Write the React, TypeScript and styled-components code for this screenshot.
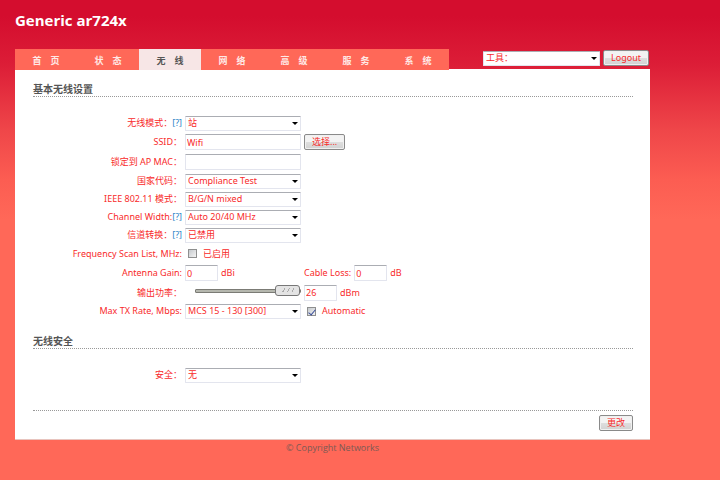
import React, { useState } from 'react'
import styled, { createGlobalStyle } from 'styled-components'

const GlobalStyle = createGlobalStyle`
  * {
    box-sizing: border-box;
  }
  body {
    margin: 0;
    min-height: 100vh;
    background: #ff6858 linear-gradient(#d40d2e 0, #d40d2e 16px, #dc1d37 64px, #ef4649 130px, #fc5d52 180px, #ff6858 220px) no-repeat;
    color: #f82a2a;
    font-family: 'Noto Sans', 'Noto Sans CJK SC', sans-serif;
    font-size: 9px;
    line-height: 12px;
  }
  input, select, button {
    font: inherit;
    color: inherit;
    margin: 0;
  }
`

const Page = styled.div`
  padding: 0 70px 24px 15px;
`

const Title = styled.h1`
  margin: 0;
  padding: 10px 0 19px;
  color: white;
  font-family: 'Open Sans', sans-serif;
  font-size: 15px;
  line-height: 20px;
`

const TopBar = styled.header`
  display: flex;
  justify-content: space-between;
  align-items: flex-start;
  height: 20px;
`

const Tabs = styled.nav`
  display: flex;
  position: relative;
  background-color: #ff6858;
`

const Tab = styled.a<{ $active?: boolean }>`
  width: 62px;
  padding: 6px 0 3px;
  text-align: center;
  text-decoration: none;
  font-weight: bold;
  color: ${(p) => (p.$active ? '#555' : '#ffe9e6')};
  background-color: ${(p) => (p.$active ? '#f7e6e6' : 'transparent')};
`

const Tools = styled.div`
  display: flex;
  gap: 3px;
  padding: 1px 1px 0 0;
`

const Panel = styled.main`
  padding: 13px 17px 8px 18px;
  background-color: white;
  border-bottom: 1px solid #e8c4be;
`

const Heading = styled.h2`
  margin: 0;
  border-bottom: 1px dotted #999;
  color: #555;
  font-size: 10px;
  line-height: 14px;
`

const Fields = styled.div<{ $end: number }>`
  padding: 17px 0 ${(p) => p.$end}px;
`

const Row = styled.div<{ $height?: number }>`
  display: flex;
  align-items: center;
  gap: 3px;
  height: ${(p) => p.$height || 18}px;
`

const Caption = styled.div`
  width: 149px;
  text-align: right;
  white-space: nowrap;
`

const Help = styled.a`
  color: #2f86c8;
  text-decoration: none;
`

const Main = styled.div`
  display: flex;
  align-items: center;
  gap: 3px;
  width: 116px;
`

const SelectBox = styled.div`
  display: grid;
  align-items: center;
  width: 117px;
  &::after {
    content: '';
    grid-area: 1 / 1;
    justify-self: end;
    margin-right: 3px;
    border: 3px solid transparent;
    border-top-color: black;
    border-bottom: 0;
    pointer-events: none;
  }
`

const SelectInput = styled.select`
  grid-area: 1 / 1;
  appearance: none;
  width: 100%;
  height: 15px;
  padding: 0 12px 0 2px;
  border: 1px solid #e3e5ee;
  border-top-color: #abadb3;
  border-radius: 1px;
  background-color: white;
  line-height: 12px;
`

const TextInput = styled.input<{ $short?: boolean }>`
  width: ${(p) => (p.$short ? '33px' : '100%')};
  height: 16px;
  padding: 0 1px;
  border: 1px solid #e3e5ee;
  border-top-color: #abadb3;
  border-radius: 1px;
  background-color: white;
`

const Button = styled.button`
  height: 16px;
  padding: 0 7px;
  border: 1px solid #8a8a8a;
  border-radius: 2px;
  background: linear-gradient(#f3f3f3 50%, #dedede 50%, #d2d2d2);
  box-shadow: inset 0 0 0 1px #f0f0f0;
  line-height: 12px;
  white-space: nowrap;
`

const Option = styled.label`
  display: flex;
  align-items: center;
  gap: 6px;
  padding-left: 3px;
`

const CheckBox = styled.input`
  display: grid;
  place-items: center;
  appearance: none;
  width: 9px;
  height: 9px;
  border: 1px solid #8e8f8f;
  background: linear-gradient(135deg, #c5c9cd, #f4f4f4);
  &:checked::after {
    content: '';
    width: 3px;
    height: 6px;
    border: solid #3b4f9b;
    border-width: 0 1px 1px 0;
    transform: rotate(40deg);
  }
`

const SliderTrack = styled.div`
  display: flex;
  width: 100%;
  padding: 0 0 4px 10px;
`

const Slider = styled.input`
  appearance: none;
  width: 106px;
  height: 12px;
  background: transparent;
  &::-webkit-slider-runnable-track {
    height: 4px;
    border: 1px solid #7b7b75;
    border-radius: 1px;
    background-color: #b5b7ae;
  }
  &::-webkit-slider-thumb {
    appearance: none;
    width: 25px;
    height: 11px;
    margin-top: -5px;
    border: 1px solid #777;
    border-radius: 3px;
    background:
      repeating-linear-gradient(120deg, transparent 0 3px, #aaa 3px 4px) center / 13px 4px no-repeat,
      #e4e4e4;
  }
`

const Actions = styled.div`
  display: flex;
  justify-content: flex-end;
  padding-top: 4px;
  border-top: 1px dotted #999;
`

const Footer = styled.footer`
  padding-top: 2px;
  color: #7d5a54;
  font-family: 'Open Sans', sans-serif;
  text-align: center;
`

const tabs = ['首　页', '状　态', '无　线', '网　络', '高　级', '服　务', '系　统']

type SelectProps = { id: string; value: string }

const Select = ({ id, value }: SelectProps) => (
  <SelectBox>
    <SelectInput id={id} defaultValue={value}>
      <option>{value}</option>
    </SelectInput>
  </SelectBox>
)

type FieldProps = {
  id: string
  label: string
  height?: number
  help?: boolean
  extra?: React.ReactNode
  children: React.ReactNode
}

const Field = ({ id, label, height, help, extra, children }: FieldProps) => (
  <Row $height={height}>
    <Caption>
      <label htmlFor={id}>{label}</label>
      {help && <Help href="#help">[?]</Help>}
    </Caption>
    <Main>{children}</Main>
    {extra}
  </Row>
)

const App = () => {
  const [power, setPower] = useState('26')

  return (
    <>
      <GlobalStyle />
      <Page>
        <Title>Generic ar724x</Title>
        <TopBar>
          <Tabs>
            {tabs.map((tab, i) => (
              <Tab key={tab} href={`#tab${i}`} $active={i === 2}>
                {tab}
              </Tab>
            ))}
          </Tabs>
          <Tools>
            <SelectBox>
              <SelectInput aria-label="工具" defaultValue="工具：">
                <option>工具：</option>
              </SelectInput>
            </SelectBox>
            <Button>Logout</Button>
          </Tools>
        </TopBar>
        <Panel>
          <Heading>基本无线设置</Heading>
          <Fields $end={14}>
            <Field id="mode" label="无线模式：" help>
              <Select id="mode" value="站" />
            </Field>
            <Field
              id="ssid"
              label="SSID："
              height={20}
              extra={<Button>选择...</Button>}
            >
              <TextInput id="ssid" defaultValue="Wifi" />
            </Field>
            <Field id="mac" label="锁定到 AP MAC：" height={20}>
              <TextInput id="mac" />
            </Field>
            <Field id="country" label="国家代码：">
              <Select id="country" value="Compliance Test" />
            </Field>
            <Field id="ieee" label="IEEE 802.11 模式：">
              <Select id="ieee" value="B/G/N mixed" />
            </Field>
            <Field id="width" label="Channel Width:" help>
              <Select id="width" value="Auto 20/40 MHz" />
            </Field>
            <Field id="shift" label="信道转换：" help>
              <Select id="shift" value="已禁用" />
            </Field>
            <Field id="scan" label="Frequency Scan List, MHz:" height={19}>
              <Option>
                <CheckBox id="scan" type="checkbox" />
                已启用
              </Option>
            </Field>
            <Field
              id="gain"
              label="Antenna Gain:"
              height={20}
              extra={
                <>
                  <label htmlFor="loss">Cable Loss:</label>
                  <TextInput id="loss" $short defaultValue="0" />
                  <span>dB</span>
                </>
              }
            >
              <TextInput id="gain" $short defaultValue="0" />
              <span>dBi</span>
            </Field>
            <Field
              id="power"
              label="输出功率："
              height={19}
              extra={
                <>
                  <TextInput
                    $short
                    aria-label="dBm"
                    value={power}
                    onChange={(e) => setPower(e.target.value)}
                  />
                  <span>dBm</span>
                </>
              }
            >
              <SliderTrack>
                <Slider
                  id="power"
                  type="range"
                  min="0"
                  max="26"
                  value={power}
                  onChange={(e) => setPower(e.target.value)}
                />
              </SliderTrack>
            </Field>
            <Field
              id="rate"
              label="Max TX Rate, Mbps:"
              extra={
                <Option>
                  <CheckBox type="checkbox" defaultChecked />
                  Automatic
                </Option>
              }
            >
              <Select id="rate" value="MCS 15 - 130 [300]" />
            </Field>
          </Fields>
          <Heading>无线安全</Heading>
          <Fields $end={26}>
            <Field id="security" label="安全：">
              <Select id="security" value="无" />
            </Field>
          </Fields>
          <Actions>
            <Button>更改</Button>
          </Actions>
        </Panel>
        <Footer>© Copyright Networks</Footer>
      </Page>
    </>
  )
}

export default App
